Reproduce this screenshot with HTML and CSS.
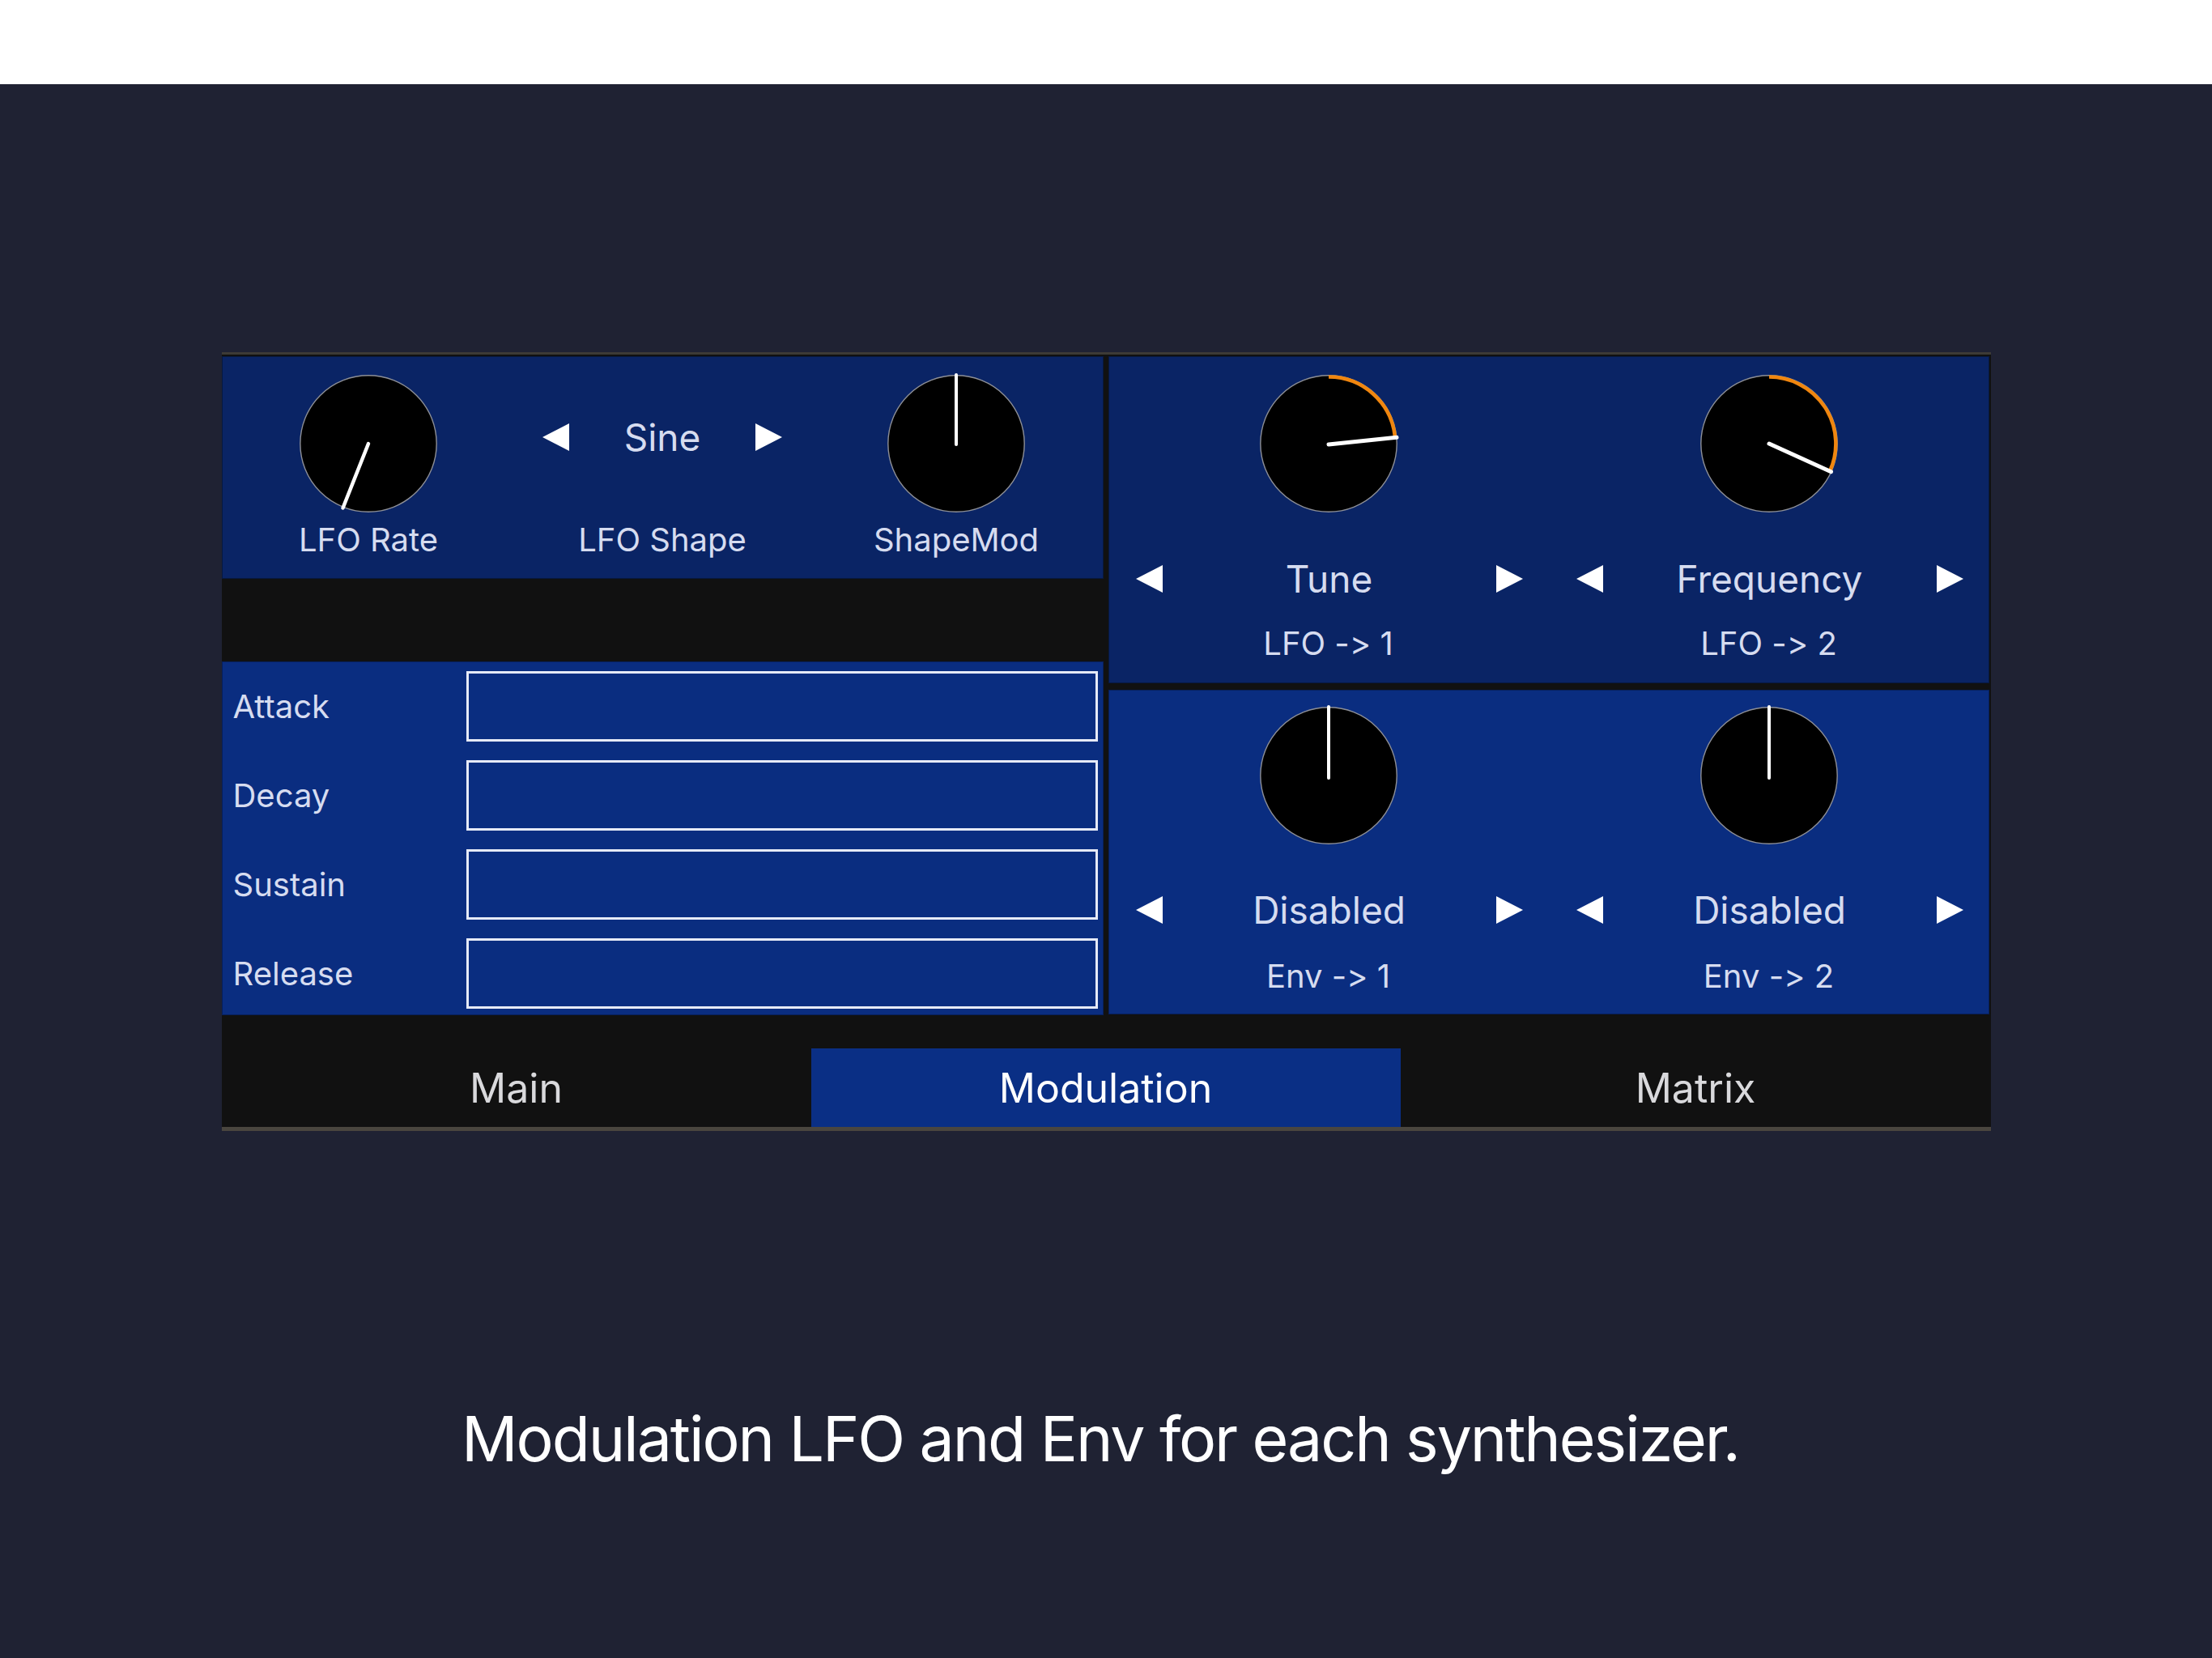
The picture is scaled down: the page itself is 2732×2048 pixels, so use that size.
FILE: index.html
```html
<!DOCTYPE html>
<html lang="en">
<head>
<meta charset="utf-8">
<title>Modulation</title>
<link rel="stylesheet" href="styles.css">
</head>
<body>
<header class="topbar"></header>
<main class="stage">
  <section class="synth">
    <div class="panes">
      <div class="col-left">
        <div class="lfo pane-dark">
          <div class="cell">
            <svg class="knob" viewBox="0 0 170 170" width="170" height="170">
              <circle cx="85" cy="85" r="84.2" fill="#000" stroke="#8d8f96" stroke-width="1.4"/>
              <line x1="85" y1="85" x2="53.5" y2="164.5" stroke="#fff" stroke-width="4.5" stroke-linecap="round"/>
            </svg>
            <div class="label">LFO Rate</div>
          </div>
          <div class="cell">
            <div class="selector-box">
              <div class="selector compact">
                <svg class="arrow" viewBox="0 0 33 34" width="33" height="34"><polygon points="33,0 33,34 0,17" fill="#fff"/></svg>
                <span class="value">Sine</span>
                <svg class="arrow" viewBox="0 0 33 34" width="33" height="34"><polygon points="0,0 0,34 33,17" fill="#fff"/></svg>
              </div>
            </div>
            <div class="label">LFO Shape</div>
          </div>
          <div class="cell">
            <svg class="knob" viewBox="0 0 170 170" width="170" height="170">
              <circle cx="85" cy="85" r="84.2" fill="#000" stroke="#8d8f96" stroke-width="1.4"/>
              <line x1="85" y1="86" x2="85" y2="0" stroke="#fff" stroke-width="4" stroke-linecap="round"/>
            </svg>
            <div class="label">ShapeMod</div>
          </div>
        </div>
        <div class="spacer"></div>
        <div class="adsr pane-bright">
          <div class="adsr-label">Attack</div><div class="slider"></div>
          <div class="adsr-label">Decay</div><div class="slider"></div>
          <div class="adsr-label">Sustain</div><div class="slider"></div>
          <div class="adsr-label">Release</div><div class="slider"></div>
        </div>
      </div>
      <div class="col-right">
        <div class="mod mod-top pane-dark">
          <div class="slot">
            <svg class="knob" viewBox="0 0 170 170" width="170" height="170">
              <circle cx="85" cy="85" r="84.2" fill="#000" stroke="#8d8f96" stroke-width="1.4"/>
              <path d="M85 2.6 A82.4 82.4 0 0 1 166.95 76.4" fill="none" stroke="#f0860f" stroke-width="4.5"/>
              <line x1="85" y1="86" x2="169" y2="77.2" stroke="#fff" stroke-width="5" stroke-linecap="round"/>
            </svg>
            <div class="selector wide">
              <svg class="arrow" viewBox="0 0 33 34" width="33" height="34"><polygon points="33,0 33,34 0,17" fill="#fff"/></svg>
              <span class="value">Tune</span>
              <svg class="arrow" viewBox="0 0 33 34" width="33" height="34"><polygon points="0,0 0,34 33,17" fill="#fff"/></svg>
            </div>
            <div class="label">LFO -&gt; 1</div>
          </div>
          <div class="slot">
            <svg class="knob" viewBox="0 0 170 170" width="170" height="170">
              <circle cx="85" cy="85" r="84.2" fill="#000" stroke="#8d8f96" stroke-width="1.4"/>
              <path d="M85 2.6 A82.4 82.4 0 0 1 160.0 119.0" fill="none" stroke="#f0860f" stroke-width="4.5"/>
              <line x1="85" y1="85" x2="161.5" y2="119.7" stroke="#fff" stroke-width="5" stroke-linecap="round"/>
            </svg>
            <div class="selector wide">
              <svg class="arrow" viewBox="0 0 33 34" width="33" height="34"><polygon points="33,0 33,34 0,17" fill="#fff"/></svg>
              <span class="value">Frequency</span>
              <svg class="arrow" viewBox="0 0 33 34" width="33" height="34"><polygon points="0,0 0,34 33,17" fill="#fff"/></svg>
            </div>
            <div class="label">LFO -&gt; 2</div>
          </div>
        </div>
        <div class="mod mod-bottom pane-bright">
          <div class="slot">
            <svg class="knob" viewBox="0 0 170 170" width="170" height="170">
              <circle cx="85" cy="85" r="84.2" fill="#000" stroke="#8d8f96" stroke-width="1.4"/>
              <line x1="85" y1="88" x2="85" y2="0" stroke="#fff" stroke-width="4" stroke-linecap="round"/>
            </svg>
            <div class="selector wide">
              <svg class="arrow" viewBox="0 0 33 34" width="33" height="34"><polygon points="33,0 33,34 0,17" fill="#fff"/></svg>
              <span class="value">Disabled</span>
              <svg class="arrow" viewBox="0 0 33 34" width="33" height="34"><polygon points="0,0 0,34 33,17" fill="#fff"/></svg>
            </div>
            <div class="label">Env -&gt; 1</div>
          </div>
          <div class="slot">
            <svg class="knob" viewBox="0 0 170 170" width="170" height="170">
              <circle cx="85" cy="85" r="84.2" fill="#000" stroke="#8d8f96" stroke-width="1.4"/>
              <line x1="85" y1="88" x2="85" y2="0" stroke="#fff" stroke-width="4" stroke-linecap="round"/>
            </svg>
            <div class="selector wide">
              <svg class="arrow" viewBox="0 0 33 34" width="33" height="34"><polygon points="33,0 33,34 0,17" fill="#fff"/></svg>
              <span class="value">Disabled</span>
              <svg class="arrow" viewBox="0 0 33 34" width="33" height="34"><polygon points="0,0 0,34 33,17" fill="#fff"/></svg>
            </div>
            <div class="label">Env -&gt; 2</div>
          </div>
        </div>
      </div>
    </div>
    <nav class="tabs">
      <div class="tab">Main</div>
      <div class="tab active">Modulation</div>
      <div class="tab">Matrix</div>
    </nav>
  </section>
  <p class="caption">Modulation LFO and Env for each synthesizer.</p>
</main>
</body>
</html>
```
FILE: styles.css
```css
* { box-sizing: border-box; }

html, body {
  margin: 0;
  padding: 0;
}

body {
  background: #1f2233;
  font-family: Inter, "Noto Sans", "Liberation Sans", sans-serif;
  font-feature-settings: "calt" 0, "liga" 0;
  font-variant-ligatures: none;
  color: #d6dcf0;
}

.topbar {
  height: 104px;
  background: #ffffff;
}

.stage {
  padding-top: 331px;
  min-height: 1944px;
}

.synth {
  width: 2185px;
  margin: 0 auto;
  background: #111111;
  border-top: 3px solid #3c3a36;
  border-bottom: 5px solid #4a463f;
  padding: 2px 2px 0 0;
}

.panes {
  display: grid;
  grid-template-columns: 1089px 1088px;
  column-gap: 6px;
  height: 814px;
}

.pane-dark {
  background: #0a2465;
  box-shadow: inset 0 0 0 1px #07193f;
}

.pane-bright {
  background: #0a2d80;
  box-shadow: inset 0 0 0 1px #071f5a;
}

.col-left,
.col-right {
  display: flex;
  flex-direction: column;
}

.col-right {
  gap: 8px;
}

/* LFO panel */
.lfo {
  height: 275px;
  display: grid;
  grid-template-columns: repeat(3, 1fr);
}

.cell {
  display: flex;
  flex-direction: column;
  align-items: center;
  padding-top: 23px;
}

.knob {
  display: block;
  flex: none;
  overflow: visible;
}

.label {
  font-size: 40px;
  line-height: 48px;
  color: #d6dcf0;
  white-space: nowrap;
}

.cell .label {
  margin-top: 10px;
}

.selector-box {
  height: 170px;
  display: flex;
  align-items: center;
  justify-content: center;
  padding-bottom: 16px;
}

.selector {
  display: flex;
  align-items: center;
}

.selector .arrow {
  display: block;
  flex: none;
}

.selector .value {
  flex: 1;
  text-align: center;
  font-size: 46px;
  line-height: 56px;
  color: #d6dcf0;
  white-space: nowrap;
}

.selector.compact {
  width: 296px;
}

.selector.wide {
  width: 100%;
  padding: 0 32px 0 34px;
  margin-top: 54px;
}

.spacer {
  height: 102px;
  flex: none;
}

/* ADSR panel */
.adsr {
  height: 437px;
  display: grid;
  grid-template-columns: 288px 1fr;
  grid-auto-rows: 87px;
  row-gap: 23px;
  padding: 12px 7px 8px 14px;
}

.adsr-label {
  display: flex;
  align-items: center;
  font-size: 40px;
  color: #d6dcf0;
}

.slider {
  border: 3px solid #e6eaf7;
}

/* modulation slots */
.mod {
  display: grid;
  grid-template-columns: 1fr 1fr;
}

.mod-top {
  height: 404px;
}

.mod-bottom {
  height: 401px;
}

.slot {
  display: flex;
  flex-direction: column;
  align-items: center;
  padding-top: 23px;
}

.slot .label {
  margin-top: 28px;
}

.mod-bottom .slot {
  padding-top: 21px;
}

.mod-bottom .selector.wide {
  margin-top: 53px;
}

.mod-bottom .slot .label {
  margin-top: 30px;
}

/* tabs */
.tabs {
  display: grid;
  grid-template-columns: 728px 728px 1fr;
  padding-top: 41px;
  margin-right: -2px;
}

.tab {
  height: 97px;
  display: flex;
  align-items: center;
  justify-content: center;
  font-size: 50px;
  color: #d9d9dc;
}

.tab.active {
  background: #0a2f85;
  color: #ffffff;
}

.caption {
  margin: 333px 0 0;
  padding-right: 14px;
  text-align: center;
  font-size: 77px;
  letter-spacing: -2.1px;
  line-height: 94px;
  color: #ffffff;
}
```
